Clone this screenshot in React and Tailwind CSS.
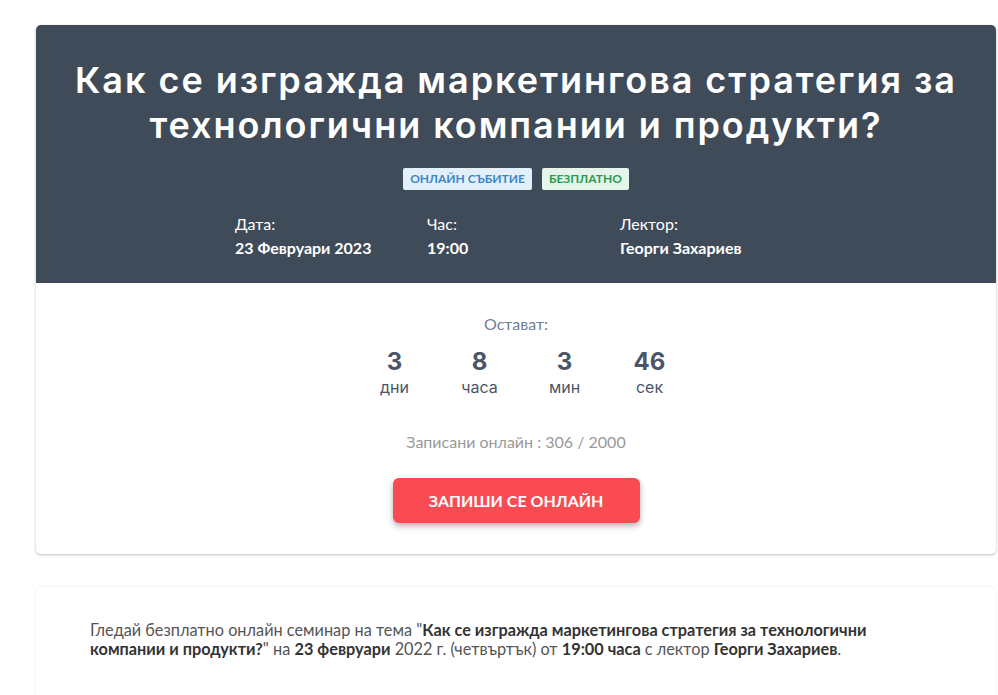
import React from "react";

export default function App() {
  const units = [
    ["3", "дни"],
    ["8", "часа"],
    ["3", "мин"],
    ["46", "сек"],
  ];
  return (
    <div className="min-h-[695px] bg-white pt-[25px] pl-[36px] pr-[2px] font-['Lato',sans-serif]">
      <div className="rounded-[5px] bg-white shadow-[0_1px_3px_rgba(0,0,0,0.25)] overflow-hidden">
        <div className="bg-[#3f4b58] h-[258px] pt-[33px] flex flex-col items-center">
          <h1 className="text-white text-center font-['Inter',sans-serif] font-semibold text-[36px] leading-[45px] tracking-[1.95px] w-[950px]">
            Как се изгражда маркетингова стратегия за технологични компании и продукти?
          </h1>
          <div className="flex gap-[10px] mt-[20px]">
            <span className="bg-[#e3f0fb] text-[#3b86c8] text-[12px] font-bold px-[7px] h-[22px] flex items-center rounded-[2px]">
              ОНЛАЙН СЪБИТИЕ
            </span>
            <span className="bg-[#e6f5ec] text-[#2b9a4c] text-[12px] font-bold px-[7px] h-[22px] flex items-center rounded-[2px]">
              БЕЗПЛАТНО
            </span>
          </div>
          <div className="grid grid-cols-[192px_193px_200px] self-start ml-[199px] mt-[22px] text-white text-[16px] leading-[24px]">
            <div>
              <div>Дата:</div>
              <div className="font-bold">23 Февруари 2023</div>
            </div>
            <div>
              <div>Час:</div>
              <div className="font-bold">19:00</div>
            </div>
            <div>
              <div>Лектор:</div>
              <div className="font-bold">Георги Захариев</div>
            </div>
          </div>
        </div>
        <div className="h-[271px] flex flex-col items-center pt-[31px]">
          <div className="text-[#718096] text-[16px] leading-[20px]">Остават:</div>
          <div className="flex mt-[14px] ml-[12px] text-[#4a5568] font-['Inter',sans-serif]">
            {units.map(([n, l], i) => (
              <div key={i} className="w-[85px] flex flex-col items-center">
                <div className="text-[24px] font-bold leading-[28px]">{n}</div>
                <div className="text-[16px] leading-[22px]">{l}</div>
              </div>
            ))}
          </div>
          <div className="text-[#999999] text-[16px] mt-[34px] leading-[20px]">
            Записани онлайн : 306 / 2000
          </div>
          <button className="mt-[26px] w-[247px] h-[45px] rounded-[6px] bg-[#fa4a52] text-white font-bold text-[16px] shadow-[0_3px_6px_rgba(0,0,0,0.3)]">
            ЗАПИШИ СЕ ОНЛАЙН
          </button>
        </div>
      </div>
      <div className="mt-[33px] rounded-[5px] bg-white shadow-[0_0_2px_rgba(0,0,0,0.12)] pt-[33px] pl-[54px] pr-[100px] h-[140px]">
        <p className="text-[#555555] text-[16.3px] leading-[19px]">
          Гледай безплатно онлайн семинар на тема "<b className="text-[#333]">Как се изгражда маркетингова стратегия за технологични компании и продукти?</b>" на <b className="text-[#333]">23 февруари</b> 2022 г. (четвъртък) от <b className="text-[#333]">19:00 часа</b> с лектор <b className="text-[#333]">Георги Захариев</b>.
        </p>
      </div>
    </div>
  );
}
